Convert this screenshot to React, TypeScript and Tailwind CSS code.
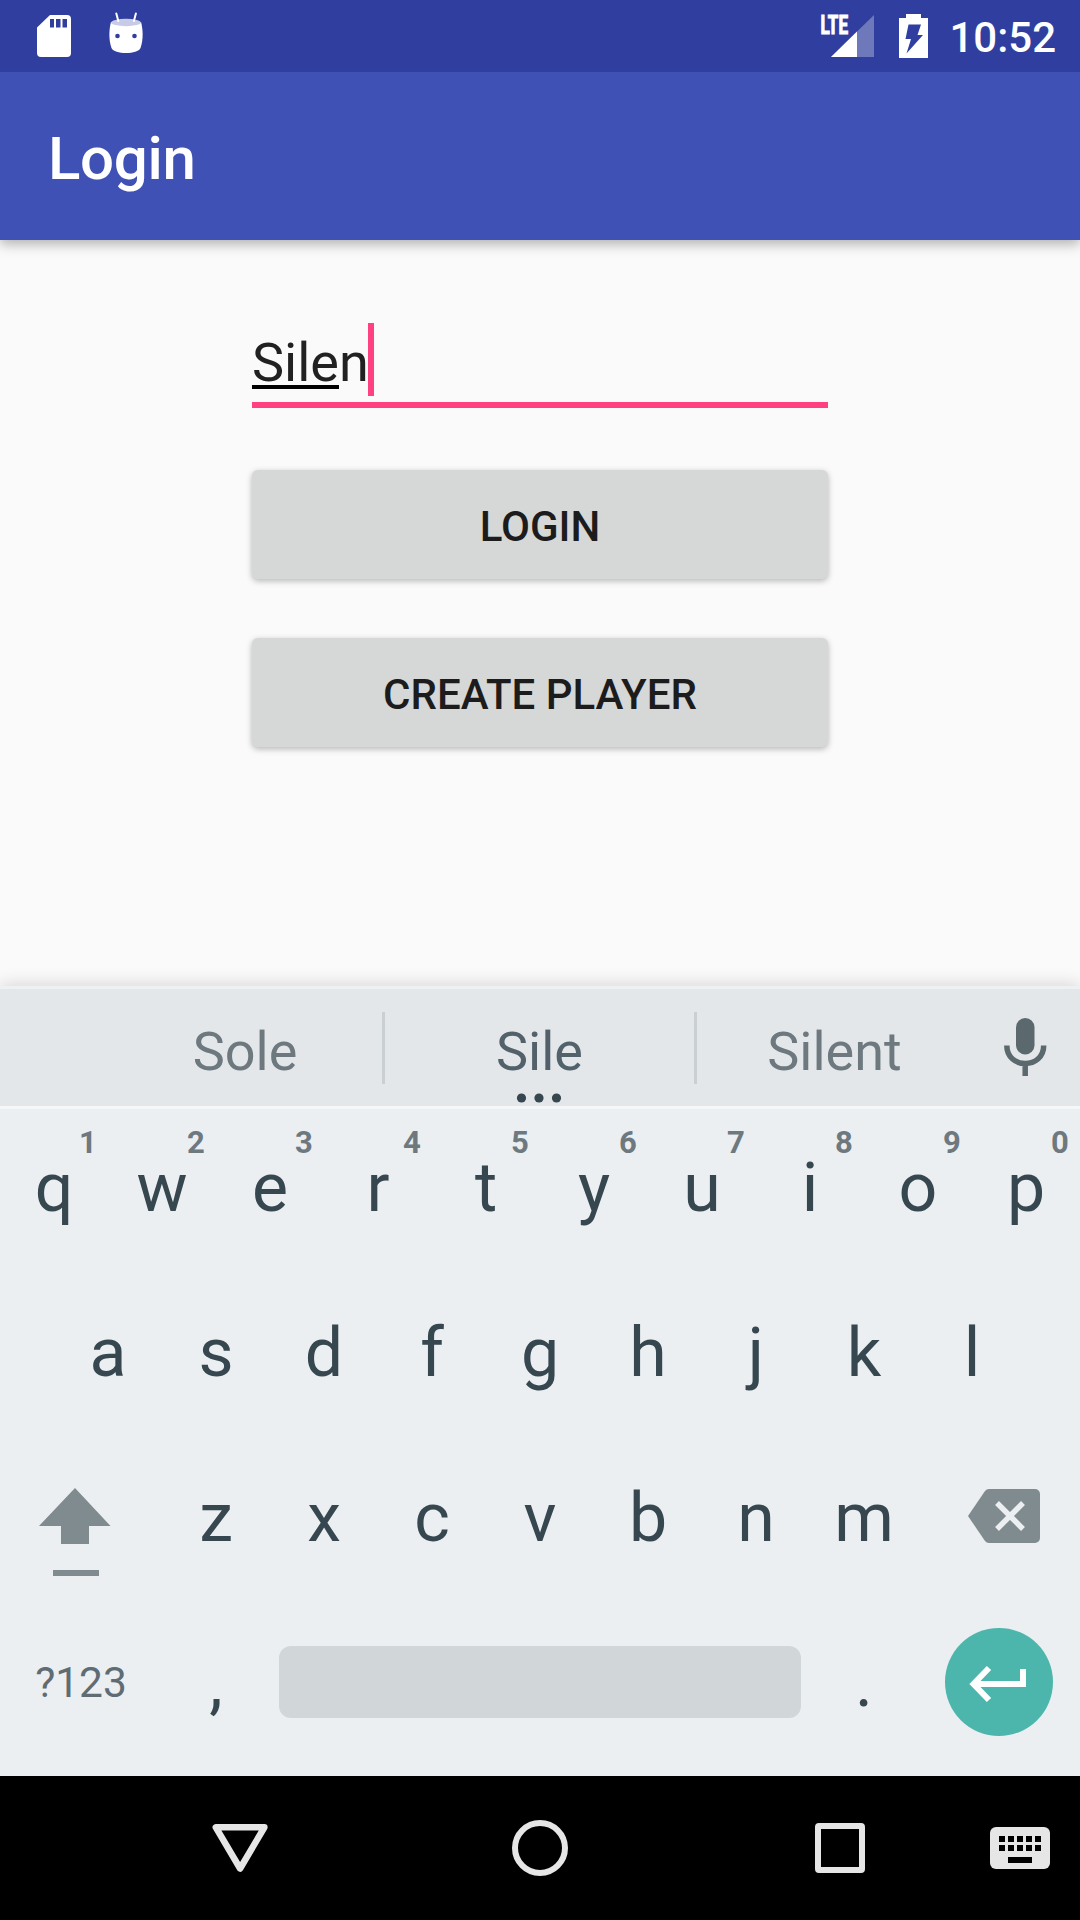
import React from "react";

const SHIFT_COLOR = "#808b8f";

function StatusBar() {
  return (
    <header className="relative z-10 flex h-[72px] items-center justify-between bg-[#303f9f] pl-[36px] pr-[24px]">
      <div className="flex items-center gap-[36px]">
        <svg width="36" height="72" viewBox="36 0 36 72" fill="#fff">
          <path
            fillRule="evenodd"
            d="M50 15H67a4 4 0 0 1 4 4V53a4 4 0 0 1-4 4H41a4 4 0 0 1-4-4V27.500ZM50 19v8.500h4V19ZM56 19v8.500h4.500V19ZM62.500 19v8.500h4.500V19Z"
          />
        </svg>
        <svg width="36" height="72" viewBox="108 0 36 72">
          <path
            d="M111 22C109 29 108.500 40 111.500 48C113 51.500 119 53 126 53S139 51.500 140.500 48C143.500 40 143 29 141 22Z"
            fill="#fff"
          />
          <ellipse cx="126" cy="22.500" rx="15" ry="3.700" fill="#c8cbe5" />
          <path d="M116.300 13.500L118.300 21M135.900 13.500L133.900 21" stroke="#fff" strokeWidth="2" strokeLinecap="round" />
          <circle cx="117.500" cy="36" r="2.300" fill="#303f9f" />
          <circle cx="134.500" cy="36" r="2.300" fill="#303f9f" />
        </svg>
      </div>
      <div className="flex items-center">
        <svg width="54" height="72" viewBox="820 0 54 72" fill="#fff">
          <path d="M874 15V57H831Z" opacity=".3" />
          <path d="M857 31.500V57H831Z" />
          <text
            x="820.500"
            y="33.500"
            fontFamily="Roboto, sans-serif"
            fontWeight="700"
            fontSize="25.500"
            stroke="#fff"
            strokeWidth="1.100"
            textLength="27.500"
            lengthAdjust="spacingAndGlyphs"
          >
            LTE
          </text>
        </svg>
        <svg className="ml-[25px]" width="29" height="72" viewBox="899 0 29 72">
          <path d="M899 18H906V14H921V18H928V58H899Z" fill="#fff" />
          <path d="M908.500 24.500H921L917.500 35H923L906.500 53.500L911 39H905.500Z" fill="#303f9f" />
        </svg>
        <span className="ml-[21px] h-[72px] text-[42px] leading-[75px] font-medium text-white">10:52</span>
      </div>
    </header>
  );
}

function Suggestions() {
  return (
    <div className="flex h-[123px] border-y-[3px] border-t-[#eef0f1] border-b-[#f5f7f9] bg-[#e3e7ea] pl-[108px] text-[54px] leading-[126px] text-[#6d797f]">
      <div className="w-[274px] text-center">Sole</div>
      <div className="mt-[23px] h-[72px] w-[3px] bg-[#cacfd2]" />
      <div className="relative w-[309px] text-center text-[#52616a]">
        Sile
        <svg className="absolute bottom-[3px] left-[131px]" width="46" height="10" fill="#37474f">
          <circle cx="5.500" cy="5" r="4.600" />
          <circle cx="23" cy="5" r="4.600" />
          <circle cx="40.500" cy="5" r="4.600" />
        </svg>
      </div>
      <div className="mt-[23px] h-[72px] w-[3px] bg-[#cacfd2]" />
      <div className="w-[275px] text-center">Silent</div>
      <svg width="108" height="117" viewBox="972 989 108 117">
        <rect x="1016" y="1018" width="18.500" height="36.500" rx="9.250" fill="#5b696f" />
        <path d="M1006.800 1045.500C1006.800 1069.500 1043.700 1069.500 1043.700 1045.500M1025.200 1064V1076" fill="none" stroke="#5b696f" strokeWidth="5.500" />
      </svg>
    </div>
  );
}

function Key({ label, hint }: { label: string; hint?: string }) {
  return (
    <div className="relative w-[108px] text-center text-[68px] leading-[80px]">
      {label}
      {hint && (
        <span className="absolute top-[-23px] right-0 w-[40px] text-[31px] leading-[36px] font-bold text-[#6d797f]">
          {hint}
        </span>
      )}
    </div>
  );
}

function Keyboard() {
  return (
    <section className="h-[790px] bg-[#ebeff2] text-[#37474f] shadow-[0_-2px_16px_rgba(0,0,0,0.14)]">
      <Suggestions />
      <div className="flex h-[165px] pt-[39px]">
        {"qwertyuiop".split("").map((c, i) => (
          <Key key={c} label={c} hint={String((i + 1) % 10)} />
        ))}
      </div>
      <div className="flex h-[165px] justify-center pt-[39px]">
        {"asdfghjkl".split("").map((c) => (
          <Key key={c} label={c} />
        ))}
      </div>
      <div className="flex h-[165px]">
        <svg width="162" height="165" viewBox="0 1439 162 165" fill={SHIFT_COLOR}>
          <path d="M75 1488L110.500 1526H89V1544H61V1526H39Z" />
          <path d="M53 1570H99V1576H53Z" />
        </svg>
        <div className="flex pt-[39px]">
          {"zxcvbnm".split("").map((c) => (
            <Key key={c} label={c} />
          ))}
        </div>
        <svg width="162" height="165" viewBox="918 1439 162 165">
          <path
            d="M989 1489H1035a5 5 0 0 1 5 5V1538a5 5 0 0 1-5 5H989Q986.500 1543 985 1541L968 1516L985 1491Q986.500 1489 989 1489Z"
            fill={SHIFT_COLOR}
          />
          <path d="M997 1503L1023 1529M1023 1503L997 1529" stroke="#ebeff2" strokeWidth="5.500" />
        </svg>
      </div>
      <div className="flex h-[172px]">
        <div className="w-[162px] pt-[54px] text-center text-[42.500px] leading-[50px] text-[#5f6c73]">?123</div>
        <div className="pt-[39px]">
          <Key label="," />
        </div>
        <div className="mx-[9px] mt-[42px] h-[72px] w-[522px] rounded-[12px] bg-[#d1d6d9]" />
        <div className="pt-[39px]">
          <Key label="." />
        </div>
        <div className="mt-[24px] ml-[27px] h-[108px] w-[108px] rounded-full bg-[#4db6ac]">
          <svg width="108" height="108" viewBox="945 1628 108 108" fill="none" stroke="#fff" strokeWidth="6">
            <path d="M1023 1669V1684H974" />
            <path d="M989 1668L973.500 1684L989 1700" />
          </svg>
        </div>
      </div>
    </section>
  );
}

function NavBar() {
  return (
    <nav className="flex h-[144px] items-center bg-black pl-[210px]">
      <svg width="60" height="144" viewBox="210 1776 60 144" fill="none" stroke="#e6e6e6" strokeWidth="6.500" strokeLinejoin="round">
        <path d="M215.800 1827.300H264.400L240.100 1868.500Z" />
      </svg>
      <svg className="ml-[240px]" width="60" height="144" viewBox="510 1776 60 144" fill="none" stroke="#e6e6e6" strokeWidth="6">
        <circle cx="540" cy="1848" r="25" />
      </svg>
      <svg className="ml-[240px]" width="60" height="144" viewBox="810 1776 60 144" fill="#e6e6e6">
        <path fillRule="evenodd" d="M819 1823H861a4 4 0 0 1 4 4V1869a4 4 0 0 1-4 4H819a4 4 0 0 1-4-4V1827a4 4 0 0 1 4-4ZM821 1829V1867H859V1829Z" />
      </svg>
      <svg className="ml-[120px]" width="60" height="144" viewBox="990 1776 60 144">
        <rect x="990" y="1827" width="60" height="42" rx="6" fill="#e6e6e6" />
        {[999, 1008, 1017, 1026, 1035].map((x) => (
          <path key={x} d={`M${x} 1836h6v6h-6ZM${x} 1845h6v6h-6Z`} />
        ))}
        <rect x="1008" y="1857" width="24" height="6" />
      </svg>
    </nav>
  );
}

export default function App() {
  return (
    <div className="flex h-[1920px] w-[1080px] flex-col overflow-hidden bg-[#fafafa] font-['Roboto',sans-serif]">
      <StatusBar />
      <div className="h-[168px] bg-[#3f51b5] pl-[48px] text-[60px] leading-[174px] font-medium tracking-[-0.3px] text-white shadow-[0_4px_12px_rgba(0,0,0,0.3)]">
        Login
      </div>
      <main className="flex flex-1 flex-col items-center pt-[83px]">
        <div className="flex h-[85px] w-[576px] border-b-[6px] border-[#ff4081] text-[54px] leading-[80px] text-[#212121]">
          <div className="relative">
            Sile
            <span className="absolute top-[62px] left-0 h-[4px] w-[87px] bg-black" />
          </div>
          <span>n</span>
          <span className="-ml-[1px] h-[73px] w-[6px] bg-[#ff4081]" />
        </div>
        <button className="mt-[62px] h-[109px] w-[576px] rounded-[6px] bg-[#d6d7d7] pt-[1px] text-[42px] leading-[111px] font-medium text-[#1c1c1c] shadow-[0_2px_6px_rgba(0,0,0,0.28)]">
          LOGIN
        </button>
        <button className="mt-[59px] h-[109px] w-[576px] rounded-[6px] bg-[#d6d7d7] pt-[1px] text-[42px] leading-[111px] font-medium text-[#1c1c1c] shadow-[0_2px_6px_rgba(0,0,0,0.28)]">
          CREATE PLAYER
        </button>
      </main>
      <Keyboard />
      <NavBar />
    </div>
  );
}
